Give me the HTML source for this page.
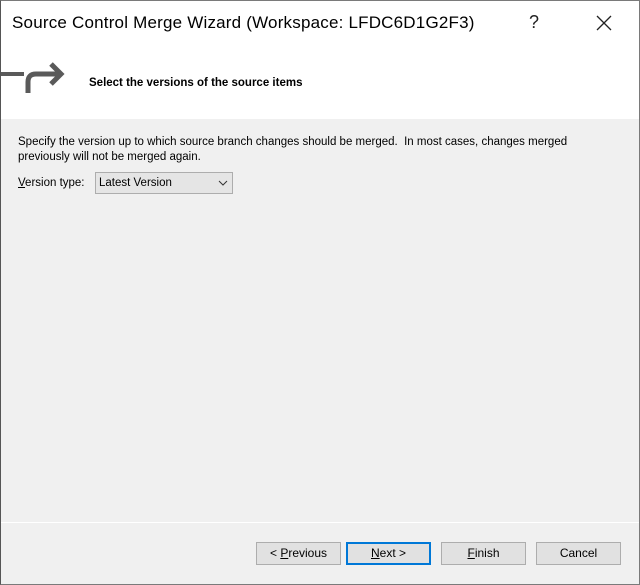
<!DOCTYPE html>
<html><head><style>
*{margin:0;padding:0;box-sizing:border-box}
body{width:640px;height:585px;position:relative;overflow:hidden;background:#f0f0f0;font-family:"Liberation Sans",sans-serif;font-size:12px;color:#000}
.top{position:absolute;left:0;top:0;width:640px;height:119px;background:#fff}
.border{position:absolute;left:0;top:0;width:640px;height:585px;border:1px solid #7a7a7a;border-left-color:#555;pointer-events:none}
.t{position:absolute;white-space:nowrap}
.btn{position:absolute;top:542px;height:23px;width:85px;background:#e1e1e1;border:1px solid #adadad;text-align:center;line-height:21px;font-size:12px}
u{text-decoration:underline}
</style></head><body>
<div class="top"></div>
<div class="t" style="left:12px;top:13px;font-size:17px;letter-spacing:0.2px;color:#000">Source Control Merge Wizard (Workspace: LFDC6D1G2F3)</div>
<div class="t" style="left:529px;top:12px;font-size:18px;color:#222">?</div>
<svg style="position:absolute;left:596px;top:15px" width="16" height="16"><path d="M1 1L15 15M15 1L1 15" stroke="#222" stroke-width="1.3"/></svg>
<svg style="position:absolute;left:0;top:60px" width="70" height="36"><path d="M0 14H24" fill="none" stroke="#5a5a5a" stroke-width="4"/><path d="M28 33V22Q28 14 36 14H60M51 4L61 14L51 24" fill="none" stroke="#5a5a5a" stroke-width="5"/></svg>
<div class="t" style="left:89px;top:77px;font-weight:bold;font-size:11.5px">Select the versions of the source items</div>
<div class="t" style="left:18px;top:135px;font-size:11.5px;line-height:15px">Specify the version up to which source branch changes should be merged.&nbsp; In most cases, changes merged<br>previously will not be merged again.</div>
<div class="t" style="left:18px;top:177px;font-size:11.5px"><u>V</u>ersion type:</div>
<div style="position:absolute;left:95px;top:172px;width:138px;height:22px;background:#e5e5e5;border:1px solid #adadad"></div>
<div class="t" style="left:99px;top:177px;font-size:11.5px">Latest Version</div>
<svg style="position:absolute;left:218px;top:180px" width="10" height="6"><path d="M1 1L5 5L9 1" fill="none" stroke="#333" stroke-width="1"/></svg>
<div style="position:absolute;left:1px;top:522px;width:638px;height:1px;background:#fff"></div>
<div class="btn" style="left:256px">&lt; <u>P</u>revious</div>
<div class="btn" style="left:346px;border:2px solid #0078d7;line-height:19px"><u>N</u>ext &gt;</div>
<div class="btn" style="left:441px"><u>F</u>inish</div>
<div class="btn" style="left:536px">Cancel</div>
<div class="border"></div>
</body></html>
